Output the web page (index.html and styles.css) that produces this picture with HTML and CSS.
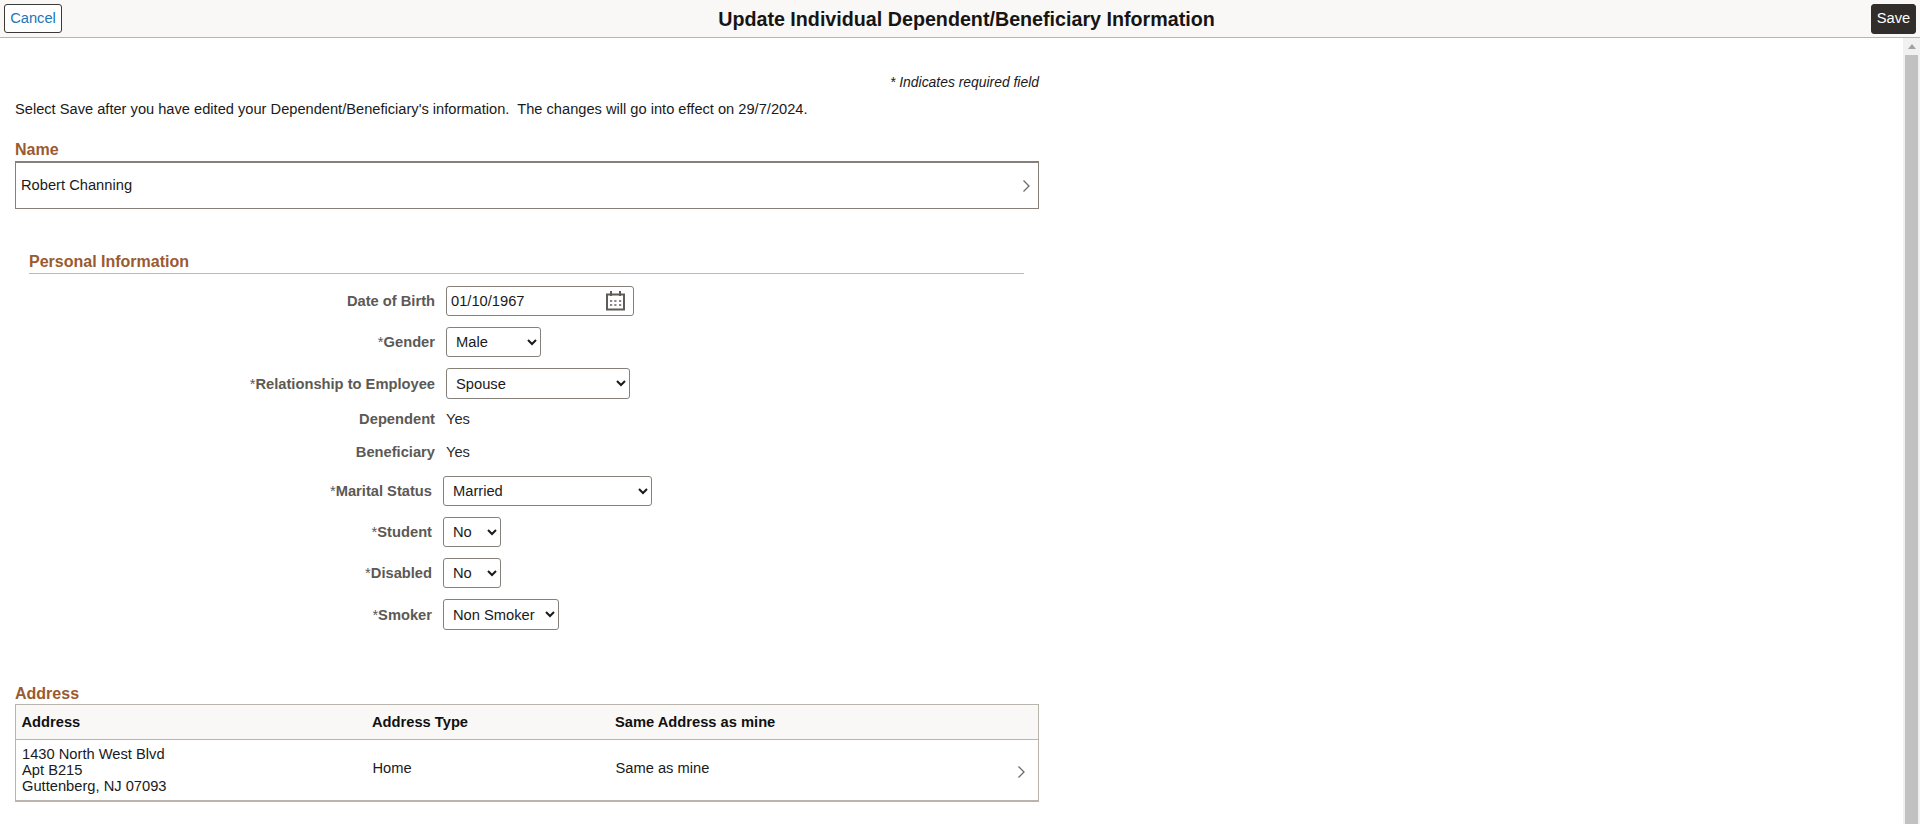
FILE: index.html
```html
<!DOCTYPE html>
<html lang="en">
<head>
<meta charset="utf-8">
<title>Update Individual Dependent/Beneficiary Information</title>
<link rel="stylesheet" href="styles.css">
</head>
<body>
<div class="app">
  <header class="topbar">
    <button class="btn btn-cancel" type="button">Cancel</button>
    <h1 class="title">Update Individual Dependent/Beneficiary Information</h1>
    <button class="btn btn-save" type="button">Save</button>
  </header>
  <div class="viewport">
    <main class="content">
      <p class="required-note">* Indicates required field</p>
      <p class="intro">Select Save after you have edited your Dependent/Beneficiary's information.&nbsp; The changes will go into effect on 29/7/2024.</p>

      <h2 class="group-title name-title">Name</h2>
      <div class="name-box">
        <span class="name-text">Robert Channing</span>
        <svg class="chevron" viewBox="0 0 8 14" aria-hidden="true"><path d="M1 1.500 6.500 7 1 12.500"/></svg>
      </div>

      <section class="personal">
        <h2 class="group-title personal-title">Personal Information</h2>
        <div class="form form-a">
          <label class="lbl">Date of Birth</label>
          <div class="date-field">
            <input class="date-input" type="text" value="01/10/1967">
            <svg class="cal" viewBox="0 0 20 20" aria-hidden="true">
              <path class="cal-line" d="M1 3.500h17v15H1zM5 0v5M14 0v5"/>
              <path class="cal-dots" d="M4 9h2.200v2H4zM8.300 9h2.200v2H8.300zM13 9h2.200v2H13zM4 13h2.200v2H4zM8.300 13h2.200v2H8.300zM13 13h2.200v2H13z"/>
            </svg>
          </div>
          <label class="lbl"><span class="req">*</span>Gender</label>
          <select class="sel sel-gender"><option>Male</option></select>
          <label class="lbl"><span class="req">*</span>Relationship to Employee</label>
          <select class="sel sel-rel"><option>Spouse</option></select>
          <span class="lbl">Dependent</span>
          <span class="val">Yes</span>
          <span class="lbl">Beneficiary</span>
          <span class="val">Yes</span>
        </div>
        <div class="form form-b">
          <label class="lbl"><span class="req">*</span>Marital Status</label>
          <select class="sel sel-marital"><option>Married</option></select>
          <label class="lbl"><span class="req">*</span>Student</label>
          <select class="sel sel-no"><option>No</option></select>
          <label class="lbl"><span class="req">*</span>Disabled</label>
          <select class="sel sel-no"><option>No</option></select>
          <label class="lbl"><span class="req">*</span>Smoker</label>
          <select class="sel sel-smoker"><option>Non Smoker</option></select>
        </div>
      </section>

      <h2 class="group-title addr-title">Address</h2>
      <table class="addr-table">
        <thead>
          <tr><th class="c1">Address</th><th class="c2">Address Type</th><th class="c3">Same Address as mine</th><th class="c4"></th></tr>
        </thead>
        <tbody>
          <tr>
            <td class="addr-lines">1430 North West Blvd<br>Apt B215<br>Guttenberg, NJ 07093</td>
            <td class="cell-up">Home</td>
            <td class="cell-up">Same as mine</td>
            <td class="chev-cell"><svg class="chevron" viewBox="0 0 8 14" aria-hidden="true"><path d="M1 1.500 6.500 7 1 12.500"/></svg></td>
          </tr>
        </tbody>
      </table>
    </main>
    <div class="scrollbar" aria-hidden="true">
      <div class="sb-arrow"></div>
      <div class="sb-thumb"></div>
    </div>
  </div>
</div>
</body>
</html>
```
FILE: styles.css
```css
* { box-sizing: border-box; }
html, body { margin: 0; height: 100%; overflow: hidden; }
body { font-family: "Liberation Sans", Arial, sans-serif; font-size: 14.7px; color: #1a1a1a; background: #fff; }

.app { display: flex; flex-direction: column; height: 824px; }

.topbar {
  flex: none; height: 38px; display: flex; align-items: flex-start; justify-content: space-between;
  padding: 4px 4px 0 4px; background: #f9f8f6; border-bottom: 1px solid #b8b5ae;
}
.btn { font: 14.7px "Liberation Sans", Arial, sans-serif; border-radius: 3px; padding: 0 0 1px; cursor: pointer; }
.btn-cancel { width: 58px; height: 29px; background: #fff; border: 1px solid #3c3a36; color: #2176b8; }
.btn-save { width: 45px; height: 30px; padding-bottom: 2px; background: #312d2a; border: 1px solid #312d2a; color: #fff; }
.title { margin: 0; font-size: 19.7px; line-height: 30px; font-weight: 700; color: #161513; }

.viewport { flex: 1; display: flex; min-height: 0; }
.content { flex: 1; min-width: 0; padding: 0 0 0 15px; overflow: hidden; }

.scrollbar { flex: none; width: 17px; background: #f1f1f1; display: flex; flex-direction: column; align-items: center; }
.sb-arrow { flex: none; margin-top: 6px; margin-bottom: 6px; width: 0; height: 0; border-left: 4px solid transparent; border-right: 4px solid transparent; border-bottom: 5px solid #a3a3a3; }
.sb-thumb { flex: 1; width: 13px; background: #c1c1c1; }

.required-note { width: 1024px; margin: 36px 0 0; line-height: 16px; font-size: 13.9px; font-style: italic; text-align: right; color: #1a1a1a; }
.intro { margin: 11px 0 0; line-height: 16px; font-size: 14.65px; color: #1a1a1a; }

.group-title { margin: 0; font-size: 16px; font-weight: 700; line-height: 16px; color: #9a5a32; }
.name-title { margin-top: 25px; }

.name-box {
  width: 1024px; height: 48px; margin-top: 3px; padding: 0 7px 0 5px;
  display: flex; align-items: center; justify-content: space-between;
  border: 1px solid #85817a; border-top-width: 2px; background: #fff;
}
.name-text { position: relative; top: -1px; }
.chevron { width: 9px; height: 14px; fill: none; stroke: #6f6b66; stroke-width: 1.300; }

.personal { width: 995px; margin-left: 14px; margin-top: 45px; }
.personal-title { padding-bottom: 3px; border-bottom: 1px solid #bdbab4; height: 20px; }

.form { display: grid; column-gap: 11px; align-items: center; justify-items: start; }
.form-a { grid-template-columns: 406px 1fr; margin-top: 12px; grid-template-rows: 30px 30px 31px 18px 26px; row-gap: 11px; }
.form-b { grid-template-columns: 403px 1fr; margin-top: 11px; row-gap: 11px; grid-template-rows: 30px 30px 30px 31px; }

.lbl { justify-self: end; font-weight: 700; color: #5c5955; white-space: nowrap; }
.req { font-weight: 400; }
.val { color: #2b2926; }

.sel {
  height: 100%; font: 14.7px "Liberation Sans", Arial, sans-serif; color: #1a1a1a; background: #fff;
  border: 1px solid #85817a; border-radius: 3px; padding: 0 5px;
}
.sel-gender { width: 95px; }
.sel-rel { width: 184px; }
.sel-marital { width: 209px; }
.sel-no { width: 58px; }
.sel-smoker { width: 116px; }

.date-field {
  width: 188px; height: 100%; display: flex; align-items: center;
  border: 1px solid #85817a; border-radius: 3px; background: #fff; padding: 0 7px 0 4px;
}
.date-input { flex: 1; min-width: 0; border: 0; padding: 0; outline: 0; font: 14.7px "Liberation Sans", Arial, sans-serif; color: #1a1a1a; background: transparent; }
.cal { flex: none; width: 20px; height: 20px; }
.cal-line { fill: none; stroke: #5f5b57; stroke-width: 2; }
.cal-dots { fill: #8a8782; }

.addr-title { margin-top: 56px; }
.addr-table { width: 1024px; margin: 2px 0 0; border-collapse: collapse; table-layout: fixed; border: 1px solid #b9b4ae; border-bottom-width: 2px; background: #fff; }
.addr-table th { height: 35px; padding: 0 0 0 5.500px; font-size: 14.7px; font-weight: 700; text-align: left; color: #111; background: #f9f8f6; border-bottom: 1px solid #b9b4ae; }
.addr-table td { height: 61px; padding: 0 0 0 6px; line-height: 16px; font-size: 14.7px; color: #1a1a1a; vertical-align: middle; }
.addr-table td.cell-up { padding-bottom: 4px; }
.c1 { width: 351px; }
.c2 { width: 243px; }
.c3 { width: auto; }
.c4 { width: 30px; }
.addr-table td.chev-cell { padding: 8px 0 0 8px; }
```
